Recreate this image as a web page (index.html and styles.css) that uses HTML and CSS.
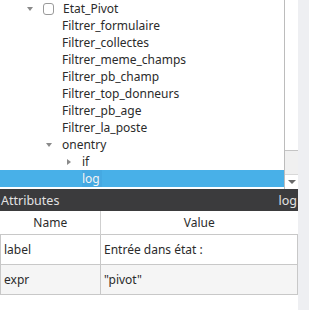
FILE: index.html
```html
<!DOCTYPE html>
<html lang="en">
<head>
    <meta charset="UTF-8">
    <title>Attributes</title>
    <link rel="stylesheet" href="styles.css">
</head>
<body>
<div class="window">
    <div class="main">
        <div class="tree-pane">
            <ul class="tree">
                <li class="row lvl1"><span class="arrow down"></span><span class="check"></span><span class="label">Etat_Pivot</span></li>
                <li class="row lvl2"><span class="arrow"></span><span class="label">Filtrer_formulaire</span></li>
                <li class="row lvl2"><span class="arrow"></span><span class="label">Filtrer_collectes</span></li>
                <li class="row lvl2"><span class="arrow"></span><span class="label">Filtrer_meme_champs</span></li>
                <li class="row lvl2"><span class="arrow"></span><span class="label">Filtrer_pb_champ</span></li>
                <li class="row lvl2"><span class="arrow"></span><span class="label">Filtrer_top_donneurs</span></li>
                <li class="row lvl2"><span class="arrow"></span><span class="label">Filtrer_pb_age</span></li>
                <li class="row lvl2"><span class="arrow"></span><span class="label">Filtrer_la_poste</span></li>
                <li class="row lvl2"><span class="arrow down"></span><span class="label">onentry</span></li>
                <li class="row lvl3"><span class="arrow right"></span><span class="label">if</span></li>
                <li class="row lvl3 selected"><span class="arrow"></span><span class="label">log</span></li>
            </ul>
            <div class="scrollbar">
                <div class="track"></div>
                <div class="thumb"></div>
                <div class="step"><span class="arrow down"></span></div>
            </div>
        </div>
        <div class="dock-title">
            <span>Attributes</span>
            <span>log</span>
        </div>
        <table class="attrs">
            <thead>
                <tr><th class="col-name">Name</th><th>Value</th></tr>
            </thead>
            <tbody>
                <tr><td>label</td><td>Entrée dans état :</td></tr>
                <tr class="alt"><td>expr</td><td>"pivot"</td></tr>
            </tbody>
        </table>
    </div>
    <div class="strip"></div>
</div>
</body>
</html>
```

FILE: styles.css
```css
*{
    margin: 0;
    padding: 0;
    box-sizing: border-box;
}
body{
    font-family: "Noto Sans", "Open Sans", sans-serif;
    font-size: 12px;
    color: #2b2b2b;
    background: #fff;
}
.window{
    display: flex;
    width: 309px;
    height: 310px;
}
.main{
    width: 298px;
    display: flex;
    flex-direction: column;
}
.strip{
    flex: 1;
    background: #eeeff2;
}

/* tree */
.tree-pane{
    height: 189px;
    display: flex;
    overflow: hidden;
}
.tree{
    list-style: none;
    flex: 1;
}
.row{
    height: 17px;
    display: flex;
    align-items: center;
    white-space: nowrap;
}
.lvl1{ padding-left: 27px; }
.lvl2{ padding-left: 46px; }
.lvl3{ padding-left: 66px; }
.row .arrow{
    width: 16px;
    height: 17px;
    display: flex;
    align-items: center;
    justify-content: flex-start;
}
.arrow.down::before{
    content: "";
    border-left: 3.5px solid transparent;
    border-right: 3.5px solid transparent;
    border-top: 4px solid #8a8a8a;
}
.arrow.right::before{
    content: "";
    margin-left: 1px;
    border-top: 3.5px solid transparent;
    border-bottom: 3.5px solid transparent;
    border-left: 4px solid #8a8a8a;
}
.check{
    width: 11px;
    height: 12px;
    border: 1px solid #9a9a9a;
    border-radius: 3px;
    background: #fff;
    margin-right: 9px;
}
.selected{
    background: #48b0e8;
    color: #f4f4f4;
}
.selected .label{
    padding-right: 2px;
    background: #45a9e2;
}

/* scrollbar */
.scrollbar{
    width: 14px;
    border-left: 1px solid #bcbcbc;
    display: flex;
    flex-direction: column;
}
.track{
    flex: 1;
}
.thumb{
    height: 25px;
    background: #f0f0f0;
    border-top: 1px solid #c4c4c4;
    border-bottom: 1px solid #d8d8d8;
}
.step{
    height: 14px;
    display: flex;
    align-items: center;
    justify-content: center;
}
.step .arrow.down::before{
    display: block;
    border-left-width: 4px;
    border-right-width: 4px;
    border-top: 4px solid #6a6a6a;
}

/* dock */
.dock-title{
    height: 22px;
    background: #3b3b3d;
    color: #e2e2e2;
    font-size: 12.5px;
    display: flex;
    justify-content: space-between;
    align-items: center;
    padding: 0 1px 0 1px;
}
.attrs{
    width: 298px;
    border-collapse: collapse;
    margin-top: 0;
}
.attrs th{
    font-weight: normal;
    height: 23px;
    border-left: 1px solid #cfcfcf;
    text-align: center;
    color: #2b2b2b;
}
.attrs th.col-name{
    width: 100px;
    border-left: none;
}
.attrs td{
    height: 30px;
    border: 1px solid #c8c8c8;
    padding-left: 3px;
}
.attrs tr.alt td{
    background: #f5f5f5;
}
```
